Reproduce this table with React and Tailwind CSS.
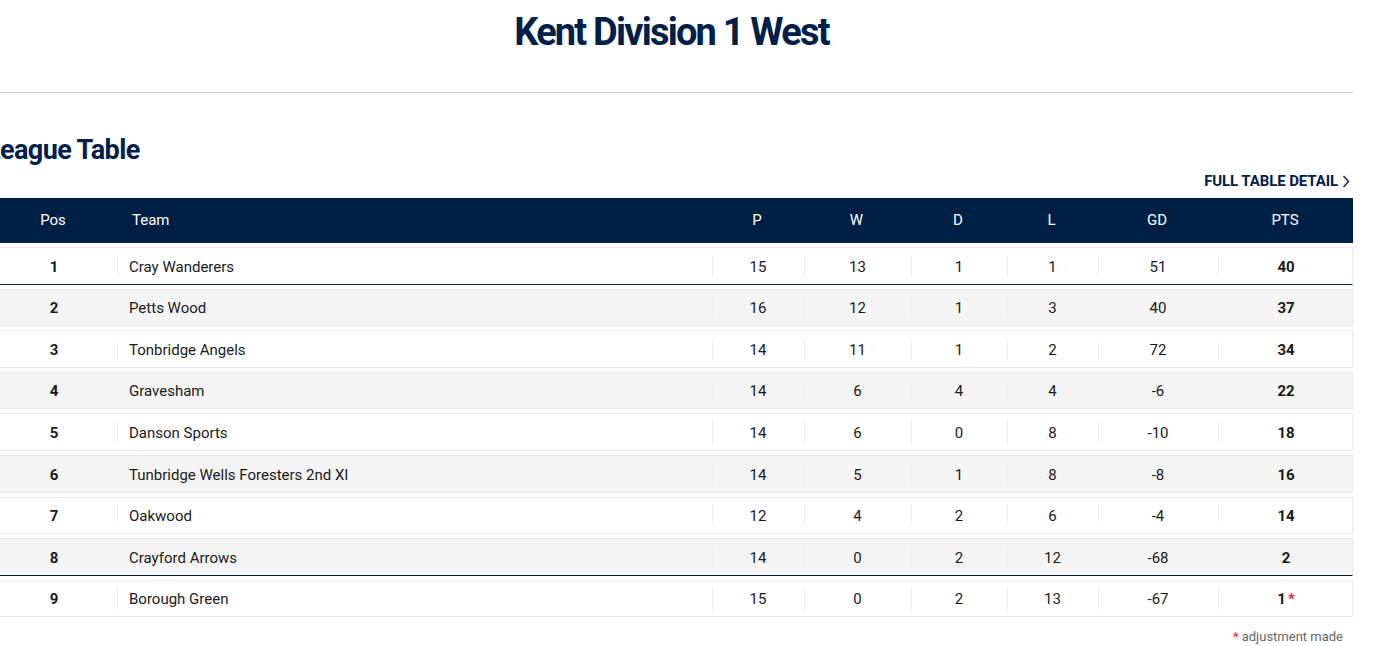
const rows = [
  { pos: 1, team: 'Cray Wanderers', p: 15, w: 13, d: 1, l: 1, gd: 51, pts: 40, line: 'navy' },
  { pos: 2, team: 'Petts Wood', p: 16, w: 12, d: 1, l: 3, gd: 40, pts: 37 },
  { pos: 3, team: 'Tonbridge Angels', p: 14, w: 11, d: 1, l: 2, gd: 72, pts: 34 },
  { pos: 4, team: 'Gravesham', p: 14, w: 6, d: 4, l: 4, gd: -6, pts: 22 },
  { pos: 5, team: 'Danson Sports', p: 14, w: 6, d: 0, l: 8, gd: -10, pts: 18 },
  { pos: 6, team: 'Tunbridge Wells Foresters 2nd XI', p: 14, w: 5, d: 1, l: 8, gd: -8, pts: 16 },
  { pos: 7, team: 'Oakwood', p: 12, w: 4, d: 2, l: 6, gd: -4, pts: 14 },
  { pos: 8, team: 'Crayford Arrows', p: 14, w: 0, d: 2, l: 12, gd: -68, pts: 2, line: 'dark' },
  { pos: 9, team: 'Borough Green', p: 15, w: 0, d: 2, l: 13, gd: -67, pts: 1, adjusted: true },
];

const cols = 'grid grid-cols-[126px_595px_92px_107px_96px_91px_120px_136px]';

function Cell({ children, bold, first }) {
  return (
    <div className="relative flex items-center justify-center h-full">
      {!first && <span className="absolute left-0 top-1/2 -translate-y-1/2 h-[22px] w-px bg-[#eeeeee]" />}
      <span className={bold ? 'font-bold pt-[2px]' : 'pt-[2px]'}>{children}</span>
    </div>
  );
}

function Row({ row, i }) {
  const bg = i % 2 === 1 ? 'bg-[#f4f4f4]' : 'bg-white';
  const bottom =
    row.line === 'navy'
      ? 'border-b-[#001f45]'
      : row.line === 'dark'
      ? 'border-b-[#0d1a2e]'
      : 'border-b-[#e6e6e6]';
  return (
    <div className={`${cols} ${bg} ${bottom} h-[37.6px] mt-[4px] border border-[#e9e9e9] text-[15px] text-[#1a1a1a]`}>
      <Cell bold first>{row.pos}</Cell>
      <div className="relative flex items-center h-full pl-[12px] pt-[2px]">
        <span className="absolute left-0 top-1/2 -translate-y-1/2 h-[22px] w-px bg-[#eeeeee]" />
        {row.team}
      </div>
      <Cell>{row.p}</Cell>
      <Cell>{row.w}</Cell>
      <Cell>{row.d}</Cell>
      <Cell>{row.l}</Cell>
      <Cell>{row.gd}</Cell>
      <Cell bold>
        {row.pts}
        {row.adjusted && <span className="text-[#e3262f] font-bold ml-[2px]">*</span>}
      </Cell>
    </div>
  );
}

export default function App() {
  return (
    <div className="bg-white min-h-[646px] overflow-hidden font-['Roboto',sans-serif]">
      <div className="w-[1363px] ml-[-10px]">
        <h1 className="mt-[10px] text-center text-[38px] leading-[44px] font-bold tracking-[-1.8px] text-[#00204a]">
          Kent Division 1 West
        </h1>
        <div className="mt-[38px] border-t border-[#cccccc]" />

        <h2 className="mt-[40px] ml-[-4px] text-[27px] leading-[34px] font-bold tracking-[-0.6px] text-[#00204a]">
          League Table
        </h2>
        <div className="flex justify-end mt-[4px] pr-[3px]">
          <a className="flex items-center gap-[4px] text-[15px] leading-[20px] font-bold tracking-[-0.1px] text-[#00204a] uppercase">
            Full Table Detail
            <svg width="8" height="13" viewBox="0 0 8 13" fill="none" stroke="#00204a" strokeWidth="1.4">
              <path d="M1.5 1 L6.5 6.5 L1.5 12" />
            </svg>
          </a>
        </div>

        <div className={`${cols} mt-[7px] h-[45px] bg-[#001f45] text-white text-[15px]`}>
          <div className="flex items-center justify-center">Pos</div>
          <div className="flex items-center pl-[16px]">Team</div>
          <div className="flex items-center justify-center">P</div>
          <div className="flex items-center justify-center">W</div>
          <div className="flex items-center justify-center">D</div>
          <div className="flex items-center justify-center">L</div>
          <div className="flex items-center justify-center">GD</div>
          <div className="flex items-center justify-center">PTS</div>
        </div>

        {rows.map((row, i) => (
          <Row key={row.pos} row={row} i={i} />
        ))}

        <p className="mt-[10px] pr-[10px] text-right text-[13px] leading-[20px] text-[#666666]">
          <span className="text-[#e3262f]">*</span> adjustment made
        </p>
      </div>
    </div>
  );
}
